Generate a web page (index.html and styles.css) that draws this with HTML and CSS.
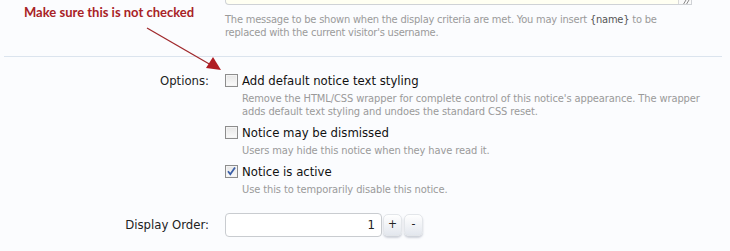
FILE: index.html
```html
<!DOCTYPE html>
<html>
<head>
<meta charset="utf-8">
<link rel="stylesheet" href="styles.css">
</head>
<body>
<div class="page">
  <div class="row row-message">
    <div class="label"></div>
    <div class="control">
      <div class="textarea"><div class="ta-body"></div><div class="ta-scroll"><svg class="grip" width="12" height="5" viewBox="0 0 12 5"><path d="M4 5 L7 0 M7 5 L10 0" stroke="#8a8a8a" stroke-width="1"/></svg></div></div>
      <p class="explain">The message to be shown when the display criteria are met. You may insert <span class="tok">{name}</span> to be replaced with the current visitor's username.</p>
    </div>
  </div>
  <hr class="sep">
  <div class="row row-options">
    <div class="label">Options:</div>
    <div class="control">
      <div class="opt">
        <div class="check-line"><span class="cb"></span><span class="cb-label">Add default notice text styling</span></div>
        <p class="hint">Remove the HTML/CSS wrapper for complete control of this notice's appearance. The wrapper adds default text styling and undoes the standard CSS reset.</p>
      </div>
      <div class="opt">
        <div class="check-line"><span class="cb"></span><span class="cb-label">Notice may be dismissed</span></div>
        <p class="hint">Users may hide this notice when they have read it.</p>
      </div>
      <div class="opt">
        <div class="check-line"><span class="cb checked"><svg viewBox="0 0 13 13" width="13" height="13"><path d="M3 6.3 L5.3 9.2 L10 2.6" fill="none" stroke="#3b5fa8" stroke-width="1.8"/></svg></span><span class="cb-label">Notice is active</span></div>
        <p class="hint">Use this to temporarily disable this notice.</p>
      </div>
    </div>
  </div>
  <div class="row row-order">
    <div class="label">Display Order:</div>
    <div class="control spin">
      <div class="num">1</div>
      <span class="btn">+</span>
      <span class="btn">-</span>
    </div>
  </div>

  <div class="note">Make sure this is not checked</div>
  <svg class="arrow" width="730" height="251" viewBox="0 0 730 251">
    <line x1="147" y1="28" x2="211" y2="65" stroke="#a0292c" stroke-width="1.3"/>
    <polygon points="221,70 206,68 213,57" fill="#b01c22"/>
  </svg>
</div>
</body>
</html>
```

FILE: styles.css
```css
html, body {
  margin: 0;
  padding: 0;
  background: #fbfcfe;
}
.page {
  position: relative;
  width: 730px;
  height: 251px;
  overflow: hidden;
  font-family: "DejaVu Sans Condensed", "DejaVu Sans", sans-serif;
  color: #1a1a1a;
}
.row {
  display: flex;
}
.label {
  width: 209px;
  flex: none;
  text-align: right;
  font-size: 13px;
  line-height: 16px;
  color: #222;
}
.control {
  margin-left: 16px;
  flex: 1;
}
.textarea {
  display: flex;
  width: 465px;
  height: 4px;
  border: 1px solid #cfd2d6;
  border-top: none;
  border-bottom-left-radius: 4px;
  background: #fffff2;
}
.ta-body {
  flex: 1;
}
.ta-scroll {
  width: 12px;
  border-left: 1px solid #d9d9d9;
  background: #fafafa;
  overflow: hidden;
}
.grip {
  display: block;
}
.explain {
  margin: 8px 0 0;
  font-size: 11px;
  line-height: 13px;
  letter-spacing: -0.2px;
  color: #9a9a9a;
  width: 470px;
}
.tok {
  color: #555;
}
.sep {
  margin: 17px 8px 0 4px;
  border: none;
  border-top: 1px solid #dbe4ee;
  height: 0;
}
.row-options {
  margin-top: 16px;
}
.opt + .opt {
  margin-top: 7px;
}
.check-line {
  display: flex;
  align-items: center;
  height: 16px;
}
.cb {
  width: 11px;
  height: 11px;
  border: 1px solid #8d8d8d;
  background: linear-gradient(#e6e6e6, #fbfbfb);
  box-shadow: inset 0 0 0 1px #f4f4f4;
  flex: none;
  position: relative;
  margin-top: -1px;
}
.cb svg {
  position: absolute;
  left: -1px;
  top: -1px;
}
.cb-label {
  margin-left: 4px;
  font-size: 13px;
  line-height: 16px;
  color: #111;
}
.hint {
  margin: 3px 0 0 17px;
  font-size: 11px;
  line-height: 13px;
  letter-spacing: -0.1px;
  color: #9a9a9a;
  width: 470px;
}
.row-order {
  margin-top: 17px;
  align-items: center;
}
.row-order .label {
  line-height: 24px;
}
.spin {
  display: flex;
  align-items: center;
}
.num {
  box-sizing: border-box;
  width: 157px;
  height: 24px;
  border: 1px solid #c9ccd0;
  border-radius: 4px;
  background: #fff;
  text-align: right;
  font-size: 13px;
  line-height: 22px;
  padding-right: 6px;
  color: #222;
}
.btn {
  box-sizing: border-box;
  width: 19px;
  height: 22px;
  margin-left: 2px;
  border-radius: 5px;
  background: linear-gradient(#ffffff, #e3e7ee);
  border: 1px solid #e3e6ea;
  box-shadow: 0 2px 2px rgba(120, 130, 150, 0.35);
  text-align: center;
  font-size: 12px;
  line-height: 19px;
  color: #222;
}
.spin .num + .btn {
  margin-left: 1px;
}
.note {
  position: absolute;
  left: 24px;
  top: 4px;
  font-family: "Lato", sans-serif;
  font-weight: 700;
  font-size: 13px;
  color: #a82226;
  white-space: nowrap;
}
.arrow {
  position: absolute;
  left: 0;
  top: 0;
  pointer-events: none;
}
```
